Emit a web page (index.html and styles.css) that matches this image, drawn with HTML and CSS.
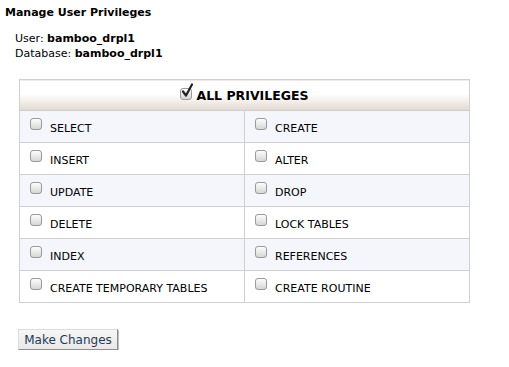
FILE: index.html
```html
<!DOCTYPE html>
<html>
<head>
<meta charset="utf-8">
<link rel="stylesheet" href="styles.css">
</head>
<body>
<div class="page">
  <h1 class="title">Manage User Privileges</h1>
  <div class="info">
    <div>User: <b>bamboo_drpl1</b></div>
    <div>Database: <b>bamboo_drpl1</b></div>
  </div>
  <table class="privs">
    <thead>
      <tr><th colspan="2"><span class="cb checked"><svg width="14" height="16" viewBox="0 0 14 16"><path d="M3 8.5 L6 12.5 L12 1.5" fill="none" stroke="#222" stroke-width="2.2" stroke-linecap="round" stroke-linejoin="round"/></svg></span>ALL PRIVILEGES</th></tr>
    </thead>
    <tbody>
      <tr class="alt"><td><span class="cb"></span>SELECT</td><td><span class="cb"></span>CREATE</td></tr>
      <tr><td><span class="cb"></span>INSERT</td><td><span class="cb"></span>ALTER</td></tr>
      <tr class="alt"><td><span class="cb"></span>UPDATE</td><td><span class="cb"></span>DROP</td></tr>
      <tr><td><span class="cb"></span>DELETE</td><td><span class="cb"></span>LOCK TABLES</td></tr>
      <tr class="alt"><td><span class="cb"></span>INDEX</td><td><span class="cb"></span>REFERENCES</td></tr>
      <tr><td><span class="cb"></span>CREATE TEMPORARY TABLES</td><td><span class="cb"></span>CREATE ROUTINE</td></tr>
    </tbody>
  </table>
  <button class="btn">Make Changes</button>
</div>
</body>
</html>
```

FILE: styles.css
```css
html, body {
  margin: 0;
  padding: 0;
  background: #ffffff;
}
body {
  font-family: "DejaVu Sans", Verdana, sans-serif;
  color: #000;
}
.page {
  padding: 5px 0 0 5px;
}
.title {
  font-size: 11px;
  font-weight: bold;
  margin: 0;
  line-height: 15px;
}
.info {
  margin: 11px 0 0 10px;
  font-size: 11px;
  line-height: 15px;
}
.privs {
  margin: 18px 0 0 14px;
  border-collapse: collapse;
  width: 451px;
  font-size: 11px;
}
.privs th {
  height: 30px;
  padding: 0;
  border: 1px solid #cfcfcf;
  font-size: 12.5px;
  font-weight: bold;
  text-align: center;
  background: linear-gradient(to bottom, #ffffff 0%, #ffffff 45%, #f3eeea 70%, #e2d8d1 100%);
  vertical-align: middle;
}
.privs td {
  width: 50%;
  height: 28px;
  padding: 3px 0 0 10px;
  border: 1px solid #cfcfcf;
  vertical-align: middle;
}
.privs tr.alt td {
  background: #f5f6fc;
}
.cb {
  display: inline-block;
  position: relative;
  width: 10px;
  height: 10px;
  border: 1px solid #9a9a9a;
  border-radius: 3px;
  background: linear-gradient(to bottom, #fdfdfd, #d6d6d6);
  vertical-align: -1px;
  margin-right: 8px;
  top: -3px;
}
.cb.checked {
  margin-right: 4px;
  top: -1px;
}
.cb svg {
  position: absolute;
  left: -1px;
  top: -6px;
}
.btn {
  margin: 26px 0 0 13px;
  font-family: "DejaVu Sans", Verdana, sans-serif;
  font-size: 12px;
  color: #1d3a58;
  background: linear-gradient(to bottom, #f6f6f6, #e8e8e8);
  border: 1px solid;
  border-color: #dcdcdc #8e8e8e #8e8e8e #dcdcdc;
  border-radius: 0;
  padding: 0;
  width: 100px;
  height: 21px;
  box-shadow: 1px 1px 0 #bdbdbd;
}
```
